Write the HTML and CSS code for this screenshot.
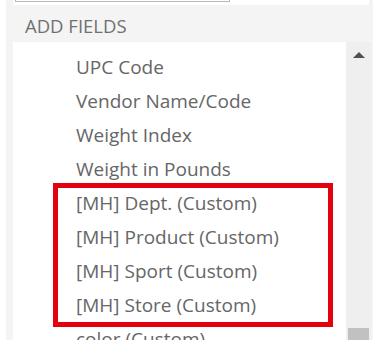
FILE: index.html
```html
<!DOCTYPE html>
<html lang="en">
<head>
<meta charset="UTF-8">
<meta name="viewport" content="width=device-width, initial-scale=1.0">
<title>Add Fields</title>
<link rel="stylesheet" href="styles.css">
</head>
<body>
<div class="panel">
  <div class="top">
    <div class="search"></div>
  </div>
  <h2 class="heading">ADD FIELDS</h2>
  <div class="fields">
    <ul class="field-list">
      <li>UPC Code</li>
      <li>Vendor Name/Code</li>
      <li>Weight Index</li>
      <li>Weight in Pounds</li>
      <li>[MH] Dept. (Custom)</li>
      <li>[MH] Product (Custom)</li>
      <li>[MH] Sport (Custom)</li>
      <li>[MH] Store (Custom)</li>
      <li>color (Custom)</li>
      <li>size (Custom)</li>
    </ul>
    <div class="scrollbar">
      <span class="arrow-up"></span>
      <span class="thumb"></span>
    </div>
  </div>
</div>
<!-- highlight drawn over the custom fields -->
<div class="highlight"></div>
</body>
</html>
```

FILE: styles.css
```css
body, html {
  margin: 0;
  height: 100%;
  overflow: hidden;
  background-color: #fff;
  font-family: "Open Sans", "Liberation Sans", sans-serif;
}

.panel {
  margin-left: 6px;
  width: 367px;
  height: 340px;
  background-color: #f4f4f4;
  display: flex;
  flex-direction: column;
  overflow: hidden;
}

.top {
  margin: 0 4px 0 7px;
  height: 5px;
  background-color: #fff;
}

.search {
  margin-left: 2px;
  width: 213px;
  height: 1px;
  border: 1px solid #b8b8b8;
  border-top: none;
}

.heading {
  margin: 0;
  height: 37px;
  padding: 6px 0 0 19px;
  box-sizing: border-box;
  font-size: 18.5px;
  font-weight: normal;
  line-height: 30px;
  color: #707070;
}

.fields {
  flex: 1;
  display: flex;
  margin: 0 2px 0 7px;
  min-height: 0;
}

.field-list {
  flex: 1;
  margin: 0;
  padding: 8px 0 0 63px;
  list-style: none;
  background-color: #fff;
  overflow: hidden;
}

.field-list li {
  font-size: 19px;
  line-height: 34px;
  color: #666;
  white-space: nowrap;
}

.scrollbar {
  width: 25px;
  background-color: #efefef;
  display: flex;
  flex-direction: column;
  align-items: center;
  justify-content: space-between;
}

.arrow-up {
  margin-top: 10px;
  width: 0;
  height: 0;
  border-left: 6px solid transparent;
  border-right: 6px solid transparent;
  border-bottom: 6px solid #505050;
}

.thumb {
  width: 21px;
  height: 12px;
  background-color: #c1c1c1;
}

.highlight {
  position: absolute;
  left: 53px;
  top: 183px;
  width: 270px;
  height: 134px;
  border: 5px solid #e5000e;
}
```
